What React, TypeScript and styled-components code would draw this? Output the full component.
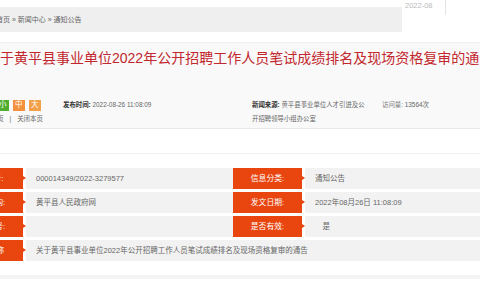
import styled, { createGlobalStyle } from "styled-components"

const GlobalStyle = createGlobalStyle`
    html, body {
        margin: 0;
        padding: 0;
        background: #fff;
        overflow: hidden;
    }
    body {
        font-family: "Liberation Sans", "Noto Sans CJK SC", sans-serif;
        color: #666;
    }
`

const Page = styled.div`
    margin-left: -46px;
    width: 526px;
`

const TopRow = styled.div`
    display: flex;
    align-items: flex-start;
`

const Breadcrumb = styled.div`
    width: 406px;
    height: 25px;
    margin-top: 7px;
    padding-left: 42px;
    background: #efefef;
    font-size: 7px;
    line-height: 25px;
    color: #666;
    white-space: nowrap;
`

const SideDate = styled.div`
    margin-left: 3px;
    width: 40px;
    height: 15px;
    border-right: 1px solid #e3e3e3;
    font-size: 7.5px;
    line-height: 11px;
    color: #bbb;
`

const ArticleHead = styled.div`
    margin-top: 10px;
    height: 85px;
    background: #f9f9f9;
    border-top: 1px solid #f1f1f1;
    border-bottom: 1px solid #e9e9e9;
`

const Title = styled.h1`
    margin: 0;
    padding: 5px 0 0 32px;
    font-size: 14px;
    font-weight: normal;
    line-height: 20px;
    color: #c1272d;
    white-space: nowrap;
    overflow: hidden;
`

const Meta = styled.div`
    display: flex;
    align-items: flex-start;
    margin-top: 30px;
    font-size: 6.4px;
    line-height: 14px;
    color: #666;
`

const Tools = styled.div`
    width: 85px;
    padding-left: 24px;
`

const SizeRow = styled.div`
    display: flex;
    align-items: center;
    gap: 4.5px;
    height: 14px;
`

const SizeBtn = styled.span<{ $bg: string }>`
    display: inline-flex;
    align-items: center;
    justify-content: center;
    width: 11.5px;
    height: 11px;
    background: ${p => p.$bg};
    color: #fff;
    font-size: 7.5px;
`

const Links = styled.div`
    white-space: nowrap;
    & > i {
        font-style: normal;
        margin: 0 6px;
    }
`

const MetaItem = styled.div<{ $w: number; $strong?: boolean }>`
    width: ${p => p.$w}px;
    & > b {
        color: ${p => (p.$strong ? "#333" : "#777")};
        font-weight: ${p => (p.$strong ? "bold" : "normal")};
    }
`

const TableBox = styled.div`
    margin-top: 24px;
    padding-top: 14px;
    border-top: 1px solid #f3f3f3;
    display: flex;
    flex-direction: column;
    gap: 3px;
`

const Row = styled.div`
    display: flex;
    height: 21px;
`

const Label = styled.div`
    position: relative;
    flex: none;
    width: 69px;
    background: #e8450f;
    color: #fff;
    font-size: 7.8px;
    line-height: 21px;
    text-align: center;

    &::after {
        content: "";
        position: absolute;
        right: -3px;
        top: 8px;
        border-left: 3px solid #e8450f;
        border-top: 2.5px solid transparent;
        border-bottom: 2.5px solid transparent;
    }
`

const Value = styled.div<{ $w?: number }>`
    margin-left: 3px;
    ${p => (p.$w ? `width: ${p.$w}px;` : "flex: 1;")}
    padding-left: 10px;
    background: #f2f2f2;
    font-size: 7.5px;
    line-height: 21px;
    color: #666;
    white-space: nowrap;
    overflow: hidden;
`

const FooterBand = styled.div`
    margin-top: 14px;
    height: 4px;
    background: #f4f4f4;
`

const App = () => {
    return (
        <>
            <GlobalStyle />
            <Page>
                <TopRow>
                    <Breadcrumb>首页 » 新闻中心 » 通知公告</Breadcrumb>
                    <SideDate>2022-08</SideDate>
                </TopRow>

                <ArticleHead>
                    <Title>关于黄平县事业单位2022年公开招聘工作人员笔试成绩排名及现场资格复审的通告</Title>
                    <Meta>
                        <Tools>
                            <SizeRow>
                                <span>字号:</span>
                                <SizeBtn $bg="#4fae30">小</SizeBtn>
                                <SizeBtn $bg="#f3913c">中</SizeBtn>
                                <SizeBtn $bg="#f3a04a">大</SizeBtn>
                            </SizeRow>
                            <Links>打印本页<i>|</i>关闭本页</Links>
                        </Tools>
                        <MetaItem $w={189} $strong>
                            <b>发布时间:</b> 2022-08-26 11:08:09
                        </MetaItem>
                        <MetaItem $w={130} $strong>
                            <b>新闻来源:</b> 黄平县事业单位人才引进及公<br />开招聘领导小组办公室
                        </MetaItem>
                        <MetaItem $w={80}>
                            <b>访问量:</b> 13564次
                        </MetaItem>
                    </Meta>
                </ArticleHead>

                <TableBox>
                    <Row>
                        <Label>索 引 号:</Label>
                        <Value $w={197}>000014349/2022-3279577</Value>
                        <Label>信息分类:</Label>
                        <Value>通知公告</Value>
                    </Row>
                    <Row>
                        <Label>发布机构:</Label>
                        <Value $w={197}>黄平县人民政府网</Value>
                        <Label>发文日期:</Label>
                        <Value>2022年08月26日 11:08:09</Value>
                    </Row>
                    <Row>
                        <Label>文　　号:</Label>
                        <Value $w={197}></Value>
                        <Label>是否有效:</Label>
                        <Value>　是</Value>
                    </Row>
                    <Row>
                        <Label>名　　称</Label>
                        <Value>关于黄平县事业单位2022年公开招聘工作人员笔试成绩排名及现场资格复审的通告</Value>
                    </Row>
                </TableBox>
                <FooterBand />
            </Page>
        </>
    )
}

export default App
